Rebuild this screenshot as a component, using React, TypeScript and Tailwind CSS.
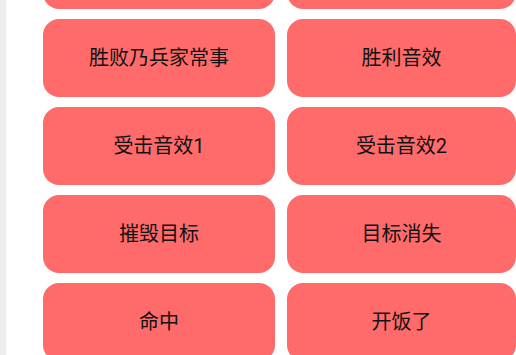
// top row is scrolled mostly out of view, its labels are not visible
const buttons = ["", "", "胜败乃兵家常事", "胜利音效", "受击音效1", "受击音效2", "摧毁目标", "目标消失", "命中", "开饭了"]

export default function App() {
  return (
    <div className="flex h-[355px] w-[516px] overflow-hidden bg-white font-['Roboto','Noto_Sans_CJK_SC',sans-serif]">
      {/* left gray strip */}
      <div className="h-full w-[6px] shrink-0 bg-[#eeeeee]"></div>

      <div className="ml-[37px] mt-[-69px] grid h-max grid-cols-[232px_229px] gap-x-[12px] gap-y-[10px]">
        {buttons.map((label, i) => (
          <button
            key={i}
            className="flex h-[78px] items-center justify-center rounded-[16px] bg-[#ff6b6b] text-[20px] text-[#111111]"
          >
            {label}
          </button>
        ))}
      </div>
    </div>
  )
}
